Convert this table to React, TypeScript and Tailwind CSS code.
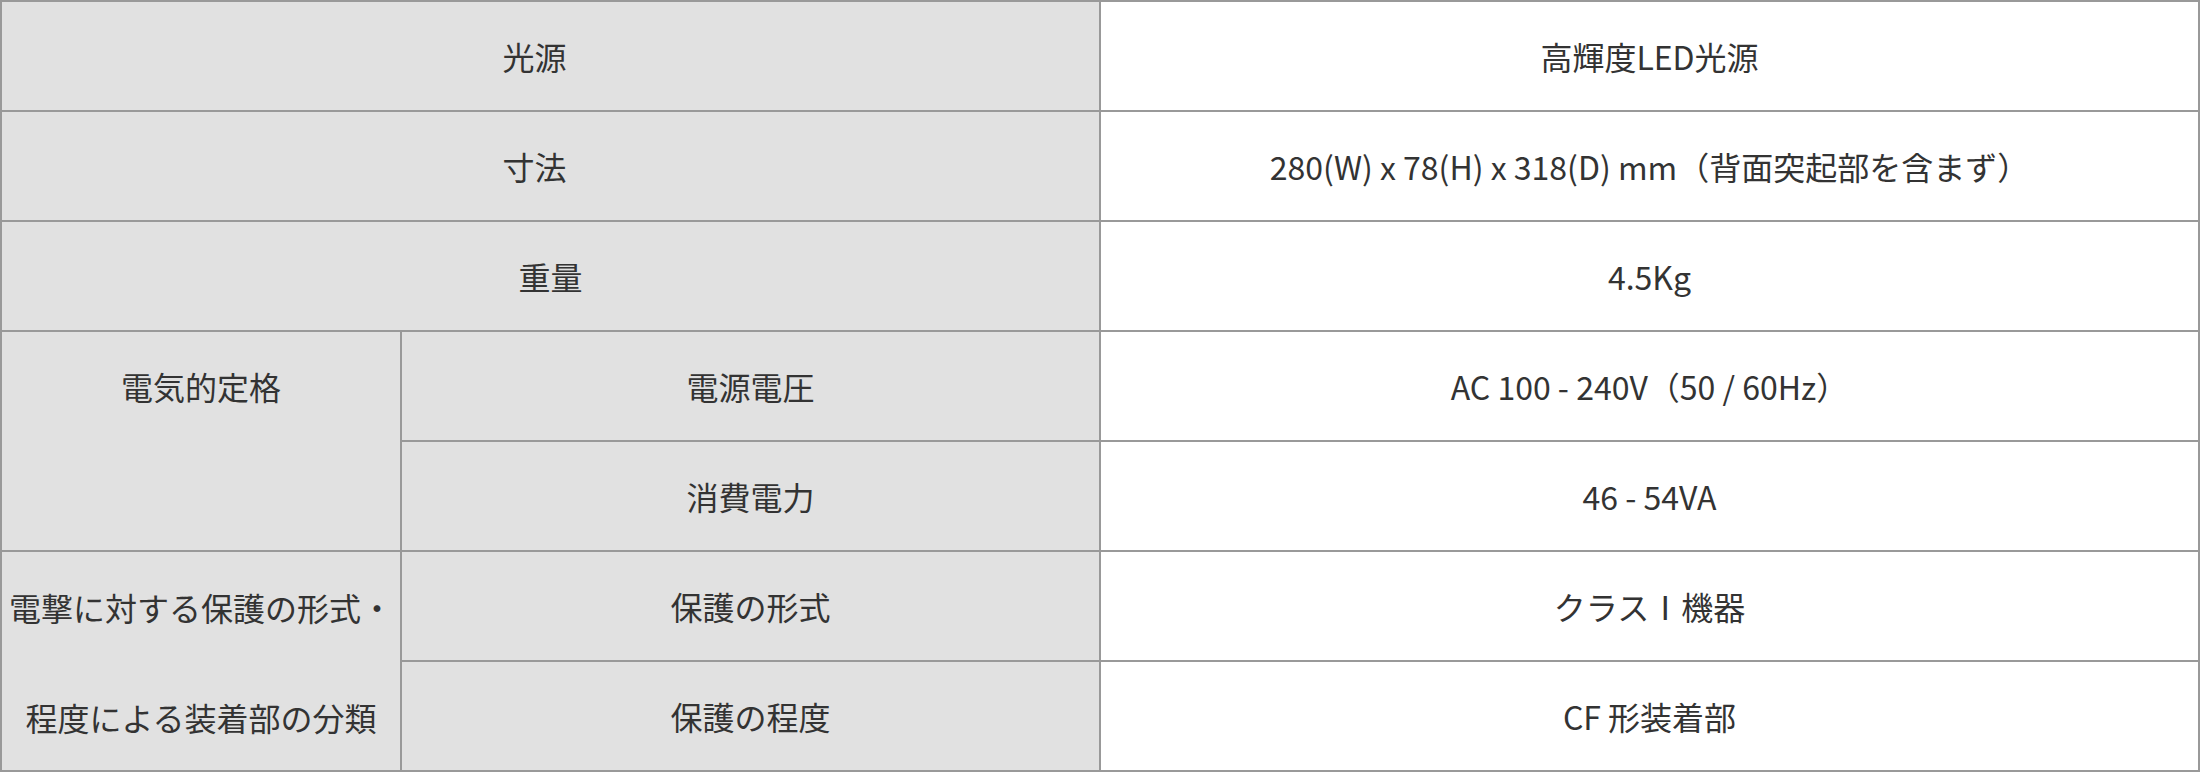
import React from "react";

const label = "bg-[#e1e1e1] flex items-center justify-center text-center";
const value = "bg-white flex items-center justify-center text-center";

export default function App() {
  return (
    <div className="w-[2200px] h-[772px] bg-white font-['Noto_Sans_CJK_JP',sans-serif] text-[32px] text-[#333333]">
      <div className="grid w-[2200px] h-[772px] bg-[#999999] p-[2px] gap-[2px] grid-cols-[398px_697px_1097px] grid-rows-[repeat(7,108px)]">
        <div className={`${label} col-span-2 pr-[32px]`}>光源</div>
        <div className={value}>高輝度LED光源</div>

        <div className={`${label} col-span-2 pr-[32px]`}>寸法</div>
        <div className={value}>280(W) x 78(H) x 318(D) mm（背面突起部を含まず）</div>

        <div className={`${label} col-span-2`}>重量</div>
        <div className={value}>4.5Kg</div>

        <div className="bg-[#e1e1e1] row-span-2 text-center leading-[108px]">電気的定格</div>
        <div className={label}>電源電圧</div>
        <div className={value}>AC 100 - 240V（50 / 60Hz）</div>
        <div className={label}>消費電力</div>
        <div className={value}>46 - 54VA</div>

        <div className="bg-[#e1e1e1] row-span-2 text-center leading-[110px]">
          電撃に対する保護の形式・程度による装着部の分類
        </div>
        <div className={label}>保護の形式</div>
        <div className={value}>クラスⅠ機器</div>
        <div className={label}>保護の程度</div>
        <div className={value}>CF 形装着部</div>
      </div>
    </div>
  );
}
